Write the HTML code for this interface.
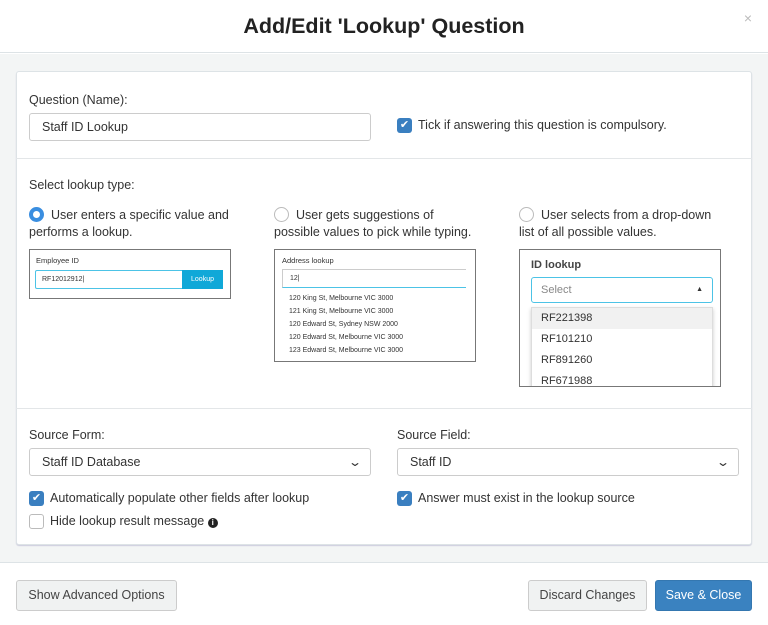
<!DOCTYPE html>
<html><head><style>
*{box-sizing:border-box;margin:0;padding:0}
body{width:768px;height:625px;overflow:hidden;font-family:"Liberation Sans",sans-serif;color:#333;background:#fff;position:relative;font-size:12.5px}
.abs{position:absolute}
.hdr{left:0;top:0;width:768px;height:53px;border-bottom:1px solid #dde3e6;background:#fff}
.hdr h1{position:absolute;left:0;width:768px;top:14px;text-align:center;font-size:21.5px;font-weight:bold;color:#222}
.x{right:16px;top:10px;color:#bbb;font-size:14px}
.body{left:0;top:54px;width:768px;height:509px;background:#f3f5f5;border-bottom:1px solid #dde3e6}
.panel{left:16px;top:71px;width:736px;height:474px;background:#fff;border:1px solid #dde3e6;border-radius:3px;box-shadow:0 1px 1px #ccd}
.hr{height:1px;background:#e3e6e8;left:16px;width:736px}
.inp{border:1px solid #ccc;border-radius:3px;height:28px;padding:0 12px;line-height:26px;font-size:12.5px;background:#fff}
.cb{width:15px;height:15px;border-radius:3px;background:#3a7fc0;color:#fff;font-size:11px;line-height:15px;text-align:center}
.cbe{width:15px;height:15px;border-radius:3px;border:1px solid #bbb;background:#fff}
.rad{width:15px;height:15px;border-radius:50%;border:1px solid #bbb;background:#fff}
.radon{border:4px solid #3a8ee0}
.box{border:1px solid #777;background:#fff}
.btn{height:31px;border:1px solid #ccc;border-radius:3px;background:#f0f2f2;line-height:29px;text-align:center;font-size:12.5px;color:#444}
.sm{font-size:7px;color:#333}
.chev{position:absolute;right:10px;top:0;font-size:12px;transform:scaleX(1.4)}
</style></head><body>
<div class="abs hdr"><h1>Add/Edit 'Lookup' Question</h1></div>
<div class="abs x">×</div>
<div class="abs body"></div>
<div class="abs panel"></div>

<div class="abs" style="left:29px;top:93px">Question (Name):</div>
<div class="abs inp" style="left:29px;top:113px;width:342px">Staff ID Lookup</div>
<div class="abs cb" style="left:397px;top:118px">✔</div>
<div class="abs" style="left:418px;top:118px">Tick if answering this question is compulsory.</div>
<div class="abs hr" style="top:158px"></div>

<div class="abs" style="left:29px;top:178px">Select lookup type:</div>
<div class="abs rad radon" style="left:29px;top:207px"></div>
<div class="abs" style="left:51px;top:207px;line-height:17px">User enters a specific value and<br><span style="margin-left:-22px">performs a lookup.</span></div>
<div class="abs rad" style="left:274px;top:207px"></div>
<div class="abs" style="left:296px;top:207px;line-height:17px">User gets suggestions of<br><span style="margin-left:-22px">possible values to pick while typing.</span></div>
<div class="abs rad" style="left:519px;top:207px"></div>
<div class="abs" style="left:541px;top:207px;line-height:17px">User selects from a drop-down<br><span style="margin-left:-22px">list of all possible values.</span></div>

<div class="abs box" style="left:29px;top:249px;width:202px;height:50px"></div>
<div class="abs sm" style="left:36px;top:256px;font-size:7.5px">Employee ID</div>
<div class="abs" style="left:35px;top:270px;width:188px;height:19px;border:1px solid #4cc3e6;border-radius:2px"></div>
<div class="abs sm" style="left:42px;top:276px">RF12012912|</div>
<div class="abs" style="left:182px;top:270px;width:41px;height:19px;background:#10a8d8;color:#fff;font-size:7px;line-height:19px;text-align:center">Lookup</div>

<div class="abs box" style="left:274px;top:249px;width:202px;height:113px"></div>
<div class="abs sm" style="left:282px;top:256px;font-size:7.5px">Address lookup</div>
<div class="abs" style="left:282px;top:269px;width:184px;height:19px;border-bottom:1px solid #4cc3e6;border-top:1px solid #ccc;border-left:1px solid #ccc"></div>
<div class="abs sm" style="left:290px;top:275px">12|</div>
<div class="abs sm" style="left:289px;top:292px;line-height:13px;font-size:7px">120 King St, Melbourne VIC 3000<br>121 King St, Melbourne VIC 3000<br>120 Edward St, Sydney NSW 2000<br>120 Edward St, Melbourne VIC 3000<br>123 Edward St, Melbourne VIC 3000</div>

<div class="abs box" style="left:519px;top:249px;width:202px;height:138px;overflow:hidden">
 <div class="abs" style="left:11px;top:9px;font-size:11px;font-weight:bold;color:#444">ID lookup</div>
 <div class="abs" style="left:11px;top:27px;width:182px;height:26px;border:1px solid #4cc3e6;border-radius:3px;font-size:11px;color:#888;line-height:24px;padding-left:9px">Select<span style="position:absolute;right:9px;top:0;font-size:7px;color:#333">▲</span></div>
 <div class="abs" style="left:11px;top:57px;width:182px;height:90px;border:1px solid #ddd;box-shadow:0 2px 4px #ccc;font-size:11px;line-height:21px">
  <div style="background:#f1f1f1;padding-left:9px">RF221398</div><div style="padding-left:9px">RF101210</div><div style="padding-left:9px">RF891260</div><div style="padding-left:9px">RF671988</div>
 </div>
</div>
<div class="abs hr" style="top:408px"></div>

<div class="abs" style="left:29px;top:428px">Source Form:</div>
<div class="abs inp" style="left:29px;top:448px;width:342px">Staff ID Database<span class="chev">⌄</span></div>
<div class="abs" style="left:397px;top:428px">Source Field:</div>
<div class="abs inp" style="left:397px;top:448px;width:342px">Staff ID<span class="chev">⌄</span></div>
<div class="abs cb" style="left:29px;top:491px">✔</div>
<div class="abs" style="left:50px;top:491px">Automatically populate other fields after lookup</div>
<div class="abs cb" style="left:397px;top:491px">✔</div>
<div class="abs" style="left:418px;top:491px">Answer must exist in the lookup source</div>
<div class="abs cbe" style="left:29px;top:514px"></div>
<div class="abs" style="left:50px;top:514px">Hide lookup result message <span style="display:inline-block;width:10px;height:10px;border-radius:50%;background:#222;color:#fff;font-size:8px;line-height:10px;text-align:center;font-weight:bold">i</span></div>

<div class="abs btn" style="left:16px;top:580px;width:161px">Show Advanced Options</div>
<div class="abs btn" style="left:528px;top:580px;width:119px">Discard Changes</div>
<div class="abs btn" style="left:655px;top:580px;width:97px;background:#3a82c0;border-color:#3477b0;color:#fff">Save &amp; Close</div>
</body></html>
